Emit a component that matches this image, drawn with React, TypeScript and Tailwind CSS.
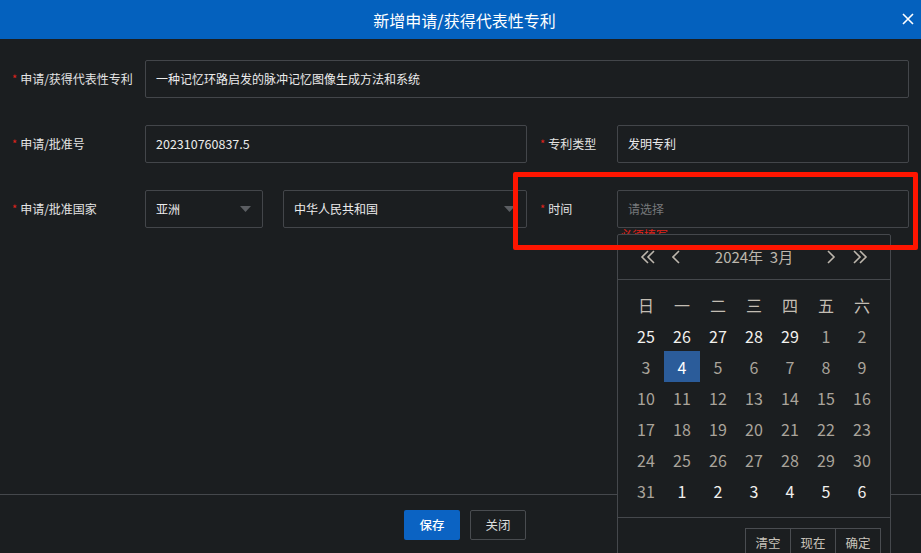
const FONT = '"Noto Sans CJK SC", "Noto Sans", sans-serif';

function Label({ text, w }: { text: string; w: string }) {
  return (
    <div className={`${w} shrink-0 flex items-center text-[12px] text-[#e4e4e4]`}>
      <span className="text-[#e0231b] text-[11px] mr-[3px] -mt-[1px]">*</span>
      {text}
    </div>
  );
}

function Select({ value, w }: { value: string; w: string }) {
  return (
    <div className={`${w} h-[38px] border border-[#43464a] rounded-[2px] flex items-center justify-between pl-[10px] pr-[11px] text-[12px] text-[#ececec]`}>
      <span>{value}</span>
      <svg width="11" height="6" viewBox="0 0 11 6">
        <path d="M0 0 L11 0 L5.5 6 Z" fill="#5b5e62" />
      </svg>
    </div>
  );
}

function Chevron({ dir, double }: { dir: 'l' | 'r'; double?: boolean }) {
  const single = dir === 'l' ? 'M7 1 L1 7 L7 13' : 'M1 1 L7 7 L1 13';
  return (
    <svg width={double ? 16 : 9} height="14" viewBox={double ? '0 0 16 14' : '0 0 9 14'} fill="none" stroke="#bdb7ad" strokeWidth="1.6">
      {double ? (
        dir === 'l' ? (
          <>
            <path d="M8 1 L2 7 L8 13" />
            <path d="M14 1 L8 7 L14 13" />
          </>
        ) : (
          <>
            <path d="M2 1 L8 7 L2 13" />
            <path d="M8 1 L14 7 L8 13" />
          </>
        )
      ) : (
        <path d={single} />
      )}
    </svg>
  );
}

const weekdays = ['日', '一', '二', '三', '四', '五', '六'];

const days: { d: number; other?: boolean; sel?: boolean }[] = [
  ...[25, 26, 27, 28, 29].map((d) => ({ d, other: true })),
  ...Array.from({ length: 31 }, (_, i) => ({ d: i + 1, sel: i + 1 === 4 })),
  ...[1, 2, 3, 4, 5, 6].map((d) => ({ d, other: true })),
];

function Calendar() {
  return (
    <div className="absolute left-[617px] top-[234px] w-[274px] h-[340px] bg-[#1b1e20] border border-[#45484c] rounded-[2px]">
      {/* month header */}
      <div className="h-[45px] border-b border-[#45484c] flex items-center justify-between px-[22px]">
        <div className="flex items-center gap-[16px]">
          <Chevron dir="l" double />
          <Chevron dir="l" />
        </div>
        <div className="text-[15px] text-[#bdb7ad]">2024年&nbsp;&nbsp;3月</div>
        <div className="flex items-center gap-[16px]">
          <Chevron dir="r" />
          <Chevron dir="r" double />
        </div>
      </div>

      {/* days */}
      <div className="px-[10px] pt-[9px] pb-[11px] grid grid-cols-7 text-[16px]">
        {weekdays.map((w) => (
          <div key={w} className="h-[31px] flex items-center justify-center text-[#c3bdb3]">
            {w}
          </div>
        ))}
        {days.map((x, i) => (
          <div
            key={i}
            className={`h-[31px] flex items-center justify-center ${
              x.sel ? 'bg-[#2b5c9a] text-white' : x.other ? 'text-[#f2f1ee]' : 'text-[#aaa49b]'
            }`}
          >
            {x.d}
          </div>
        ))}
      </div>

      {/* footer */}
      <div className="border-t border-[#45484c] flex justify-end pr-[9px] pt-[10px]">
        {['清空', '现在', '确定'].map((t) => (
          <div key={t} className="w-[46px] h-[30px] border border-[#4a4d51] -ml-px flex items-center justify-center text-[12.5px] text-[#c8c3ba]">
            {t}
          </div>
        ))}
      </div>
    </div>
  );
}

export default function App() {
  return (
    <div className="relative w-[921px] h-[553px] overflow-hidden bg-[#1b1e20] flex flex-col" style={{ fontFamily: FONT }}>
      {/* Title bar */}
      <div className="relative h-[39px] shrink-0 bg-[#0461be] flex items-center justify-center pl-[8px] text-white text-[16px]">
        新增申请/获得代表性专利
        <svg className="absolute right-[7px] top-[13px]" width="12" height="12" viewBox="0 0 12 12" stroke="white" strokeWidth="1.6">
          <path d="M1 1 L11 11 M11 1 L1 11" />
        </svg>
      </div>

      {/* Form */}
      <div className="flex-1 pt-[21px] pl-[12px] flex flex-col gap-[27px]">
        <div className="flex">
          <Label text="申请/获得代表性专利" w="w-[133px]" />
          <div className="w-[764px] h-[38px] border border-[#43464a] rounded-[2px] flex items-center pl-[10px] text-[12px] text-[#ececec]">
            一种记忆环路启发的脉冲记忆图像生成方法和系统
          </div>
        </div>

        <div className="flex">
          <Label text="申请/批准号" w="w-[133px]" />
          <div className="w-[382px] h-[38px] border border-[#43464a] rounded-[2px] flex items-center pl-[10px] text-[12.5px] text-[#ececec]">
            202310760837.5
          </div>
          <Label text="专利类型" w="w-[90px] pl-[13px]" />
          <div className="w-[292px] h-[38px] border border-[#43464a] rounded-[2px] flex items-center pl-[10px] text-[12px] text-[#ececec]">
            发明专利
          </div>
        </div>

        <div className="flex">
          <Label text="申请/批准国家" w="w-[133px]" />
          <Select value="亚洲" w="w-[118px]" />
          <div className="w-[20px]" />
          <Select value="中华人民共和国" w="w-[244px]" />
          <Label text="时间" w="w-[90px] pl-[13px]" />
          <div className="relative w-[292px] h-[38px] border border-[#43464a] rounded-[2px] flex items-center pl-[10px] text-[12px] text-[#77797b]">
            请选择
            <span className="absolute left-[2px] top-[35px] text-[12px] text-[#e0231b]">必须填写</span>
          </div>
        </div>
      </div>

      {/* Footer */}
      <div className="h-[59px] shrink-0 border-t border-[#45484c] flex justify-center items-start pt-[15px] pl-[9px] gap-[10px]">
        <button className="w-[56px] h-[30px] rounded-[2px] bg-[#0b63c3] text-white text-[12.5px] font-medium">保存</button>
        <button className="w-[56px] h-[30px] rounded-[2px] border border-[#494c50] text-[#dcdcdc] text-[12.5px]">关闭</button>
      </div>

      <Calendar />

      {/* highlight annotation */}
      <div className="absolute left-[513px] top-[172px] w-[405px] h-[78px] border-[5px] border-[#ff1500] rounded-[2px] pointer-events-none" />
    </div>
  );
}
